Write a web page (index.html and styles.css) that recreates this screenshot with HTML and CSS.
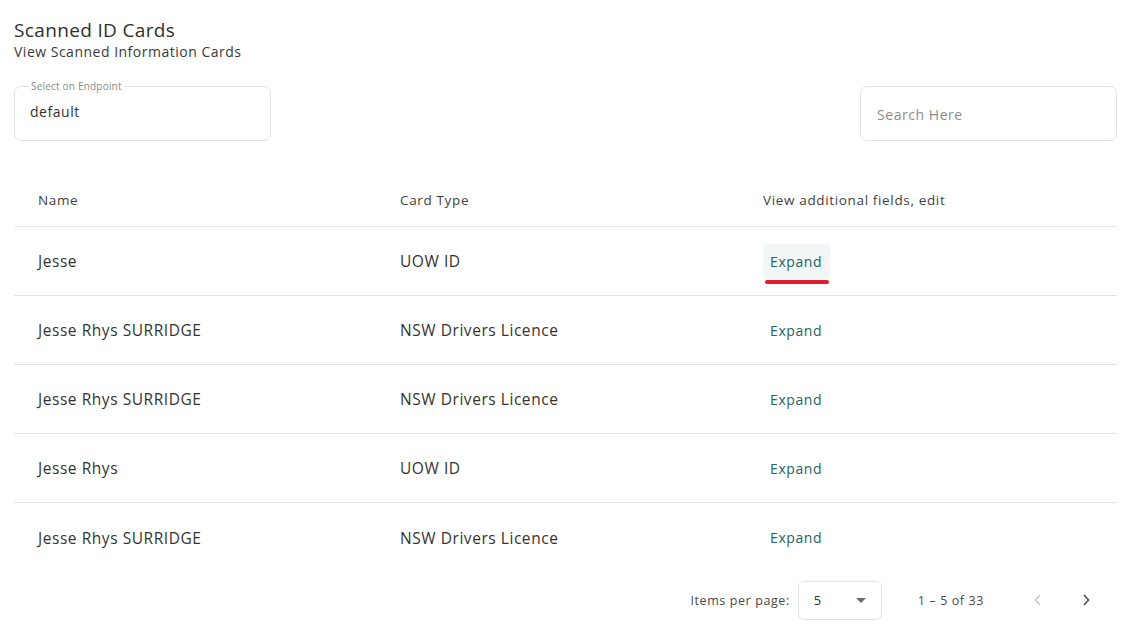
FILE: index.html
```html
<!DOCTYPE html>
<html lang="en">
<head>
<meta charset="utf-8">
<title>Scanned ID Cards</title>
<link rel="stylesheet" href="styles.css">
</head>
<body>
<main class="page">
  <header class="head">
    <h1 class="title">Scanned ID Cards</h1>
    <p class="subtitle">View Scanned Information Cards</p>
  </header>

  <div class="filters">
    <fieldset class="field field-select">
      <legend class="field-label">Select on Endpoint</legend>
      <span class="field-value">default</span>
    </fieldset>
    <div class="field field-search">
      <span class="placeholder">Search Here</span>
    </div>
  </div>

  <div class="table">
    <div class="row row-head">
      <div class="cell">Name</div>
      <div class="cell">Card Type</div>
      <div class="cell">View additional fields, edit</div>
    </div>
    <div class="row">
      <div class="cell">Jesse</div>
      <div class="cell">UOW ID</div>
      <div class="cell"><span class="expand is-active">Expand</span></div>
    </div>
    <div class="row">
      <div class="cell">Jesse Rhys SURRIDGE</div>
      <div class="cell">NSW Drivers Licence</div>
      <div class="cell"><span class="expand">Expand</span></div>
    </div>
    <div class="row">
      <div class="cell">Jesse Rhys SURRIDGE</div>
      <div class="cell">NSW Drivers Licence</div>
      <div class="cell"><span class="expand">Expand</span></div>
    </div>
    <div class="row">
      <div class="cell">Jesse Rhys</div>
      <div class="cell">UOW ID</div>
      <div class="cell"><span class="expand">Expand</span></div>
    </div>
    <div class="row row-last">
      <div class="cell">Jesse Rhys SURRIDGE</div>
      <div class="cell">NSW Drivers Licence</div>
      <div class="cell"><span class="expand">Expand</span></div>
    </div>
  </div>

  <div class="paginator">
    <span class="pg-label">Items per page:</span>
    <div class="pg-select">
      <span>5</span>
      <span class="caret"></span>
    </div>
    <span class="pg-range">1 – 5 of 33</span>
    <span class="pg-btn is-disabled">
      <svg width="10" height="14" viewBox="0 0 10 14"><path d="M7 2 L2.5 7 L7 12" fill="none" stroke="currentColor" stroke-width="1.8"/></svg>
    </span>
    <span class="pg-btn">
      <svg width="10" height="14" viewBox="0 0 10 14"><path d="M3 2 L7.5 7 L3 12" fill="none" stroke="currentColor" stroke-width="1.8"/></svg>
    </span>
  </div>
</main>
</body>
</html>
```

FILE: styles.css
```css
* { box-sizing: border-box; }

html, body {
  margin: 0;
  padding: 0;
  background: #ffffff;
}

body {
  font-family: "Open Sans", "Liberation Sans", sans-serif;
  color: #333333;
}

.page {
  width: 1127px;
  padding: 18px 10px 0 14px;
}

.head { margin: 0; }

.title {
  margin: 0;
  font-size: 19px;
  font-weight: 500;
  line-height: 24px;
  color: #2e2e2e;
  letter-spacing: 0.35px;
}

.subtitle {
  margin: 0;
  font-size: 14px;
  line-height: 20px;
  color: #3a3a3a;
  letter-spacing: 0.5px;
}

.filters {
  display: flex;
  justify-content: space-between;
  align-items: flex-end;
  margin-top: 19px;
}

.field {
  width: 257px;
  height: 55px;
  border: 1px solid #e2e2e2;
  border-radius: 7px;
  margin: 0;
}

.field-select {
  position: relative;
  padding: 0 15px;
  height: 60px;
  min-width: 0;
}

.field-label {
  font-size: 10px;
  line-height: 10px;
  color: #8a8a8a;
  padding: 0 2px;
  margin-left: -1px;
  margin-top: 1px;
  letter-spacing: 0.2px;
}

.field-value {
  display: block;
  margin-top: 11px;
  font-size: 14px;
  line-height: 20px;
  color: #333;
  letter-spacing: 0.55px;
}

.field-search {
  display: flex;
  align-items: center;
  padding: 2px 15px 0 16px;
}

.placeholder {
  font-size: 14px;
  color: #8c8c8c;
  letter-spacing: 0.55px;
}

.table {
  margin-top: 30px;
  width: 1103px;
}

.row {
  display: grid;
  grid-template-columns: 362px 363px 1fr;
  align-items: center;
  height: 69px;
  border-bottom: 1px solid #e4e4e4;
  font-size: 15.5px;
  color: #333;
  letter-spacing: 0.55px;
}

.row-head {
  height: 56px;
  font-size: 13.5px;
  color: #3f3f3f;
  letter-spacing: 0.65px;
  padding-top: 2px;
}

.row-last { border-bottom: none; }

.cell {
  padding-left: 24px;
}

.expand {
  position: relative;
  display: inline-block;
  height: 35px;
  line-height: 35px;
  padding: 0 7px 0 7px;
  border-radius: 4px;
  font-size: 14px;
  color: #24645f;
  letter-spacing: 0.6px;
}

.expand.is-active {
  background: #f2f6f6;
  padding-right: 8px;
}

.expand.is-active::after {
  content: "";
  position: absolute;
  left: 2px;
  right: 1px;
  bottom: -5px;
  height: 4px;
  border-radius: 2px;
  background: #e41b2b;
}

.paginator {
  display: flex;
  justify-content: flex-end;
  align-items: center;
  height: 56px;
  width: 1103px;
  padding-right: 11px;
  font-size: 12.5px;
  color: #4a4a4a;
  letter-spacing: 0.6px;
}

.pg-label { margin-right: 8px; }

.pg-select {
  display: flex;
  align-items: center;
  justify-content: space-between;
  width: 84px;
  height: 39px;
  border: 1px solid #e2e2e2;
  border-radius: 6px;
  padding: 0 15px 0 15px;
  font-size: 13px;
  color: #333;
}

.caret {
  width: 0;
  height: 0;
  border-left: 5px solid transparent;
  border-right: 5px solid transparent;
  border-top: 5px solid #6b6b6b;
}

.pg-range {
  margin-left: 36px;
  margin-right: 34px;
  color: #4a4a4a;
}

.pg-btn {
  display: flex;
  align-items: center;
  justify-content: center;
  width: 40px;
  height: 40px;
  margin-left: 8px;
  color: #5a5a5a;
}

.pg-btn.is-disabled { color: #cfcfcf; margin-left: 0; }
```
